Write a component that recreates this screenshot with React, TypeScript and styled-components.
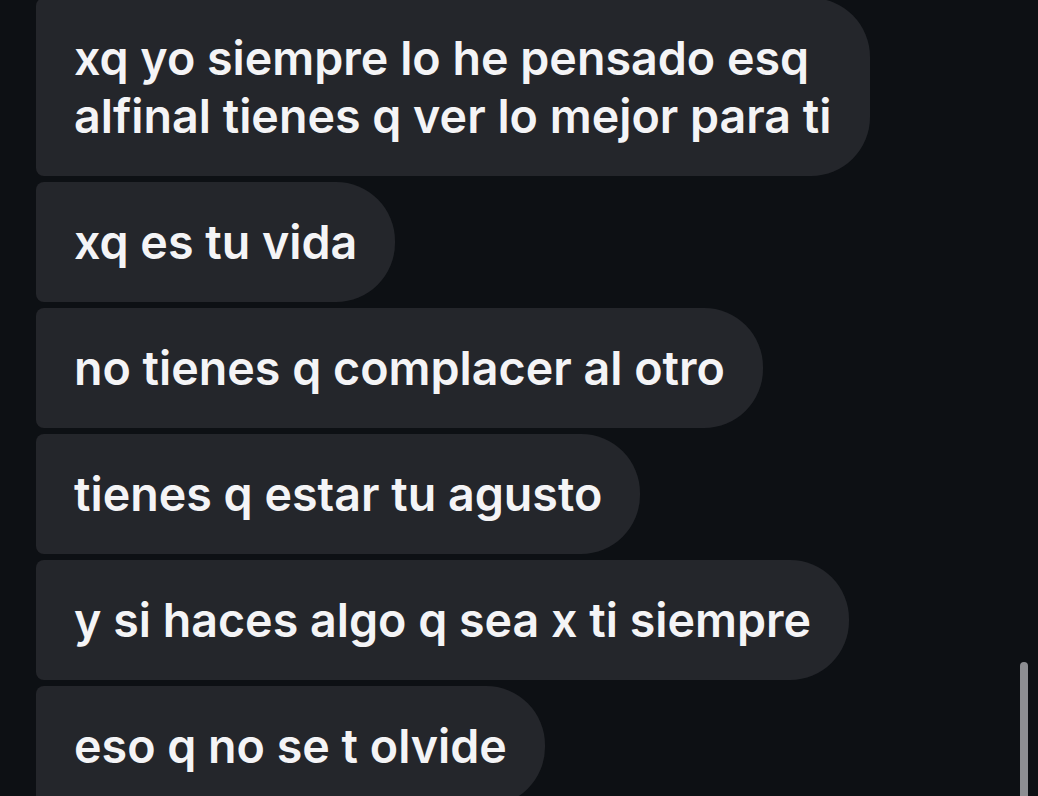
import React from 'react'
import styled, { createGlobalStyle } from 'styled-components'

const GlobalStyle = createGlobalStyle`
  html, body {
    margin: 0;
    padding: 0;
    background: #0d1014;
    overflow: hidden;
  }
`

const Screen = styled.div`
  position: relative;
  width: 1038px;
  height: 796px;
  overflow: hidden;
  background: #0d1014;
  font-family: Inter, 'Open Sans', 'Liberation Sans', sans-serif;
`

const Thread = styled.div`
  display: flex;
  flex-direction: column;
  align-items: flex-start;
  gap: 6px;
  padding-left: 36px;
  margin-top: -2px;
`

const Bubble = styled.div`
  background: #24262b;
  color: #f4f4f6;
  font-size: 46.6px;
  font-weight: 600;
  line-height: 58px;
  padding: 31px 38px;
  border-radius: 8px 59px 59px 8px;
  white-space: pre-line;
`

const ScrollThumb = styled.div`
  position: absolute;
  right: 10px;
  top: 662px;
  width: 8px;
  height: 150px;
  border-radius: 4px;
  background: #8d8e92;
`

const messages = [
  'xq yo siempre lo he pensado esq\nalfinal tienes q ver lo mejor para ti',
  'xq es tu vida',
  'no tienes q complacer al otro',
  'tienes q estar tu agusto',
  'y si haces algo q sea x ti siempre',
  'eso q no se t olvide',
]

export default function App() {
  return (
    <Screen>
      <GlobalStyle />
      <Thread>
        {messages.map((text, i) => (
          <Bubble key={i}>{text}</Bubble>
        ))}
      </Thread>
      <ScrollThumb />
    </Screen>
  )
}
